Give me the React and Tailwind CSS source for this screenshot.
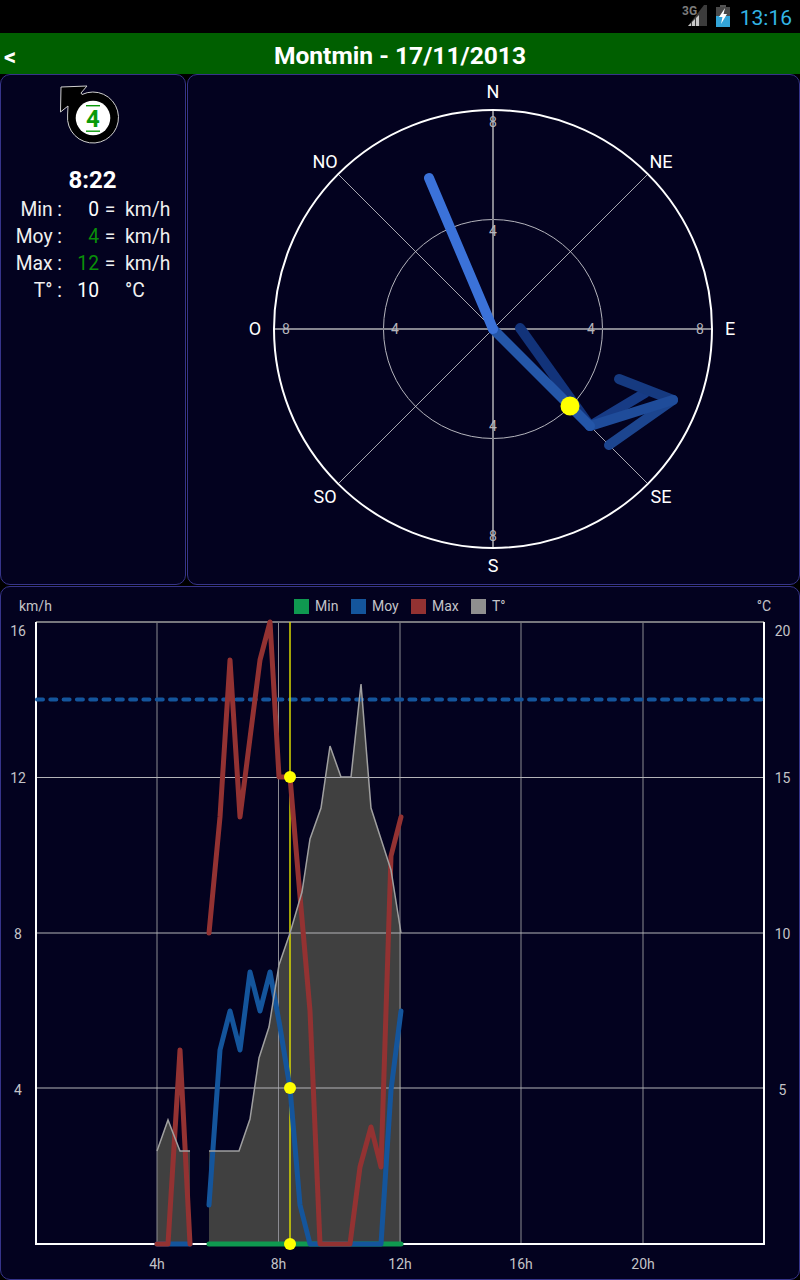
import React from 'react';

const toPoints = (pts) => pts.map((p) => p.join(',')).join(' ');

const tempA = [[157, 1151], [168, 1120], [180, 1151], [190, 1151]];
const tempB = [[209, 1151], [219, 1151], [229, 1151], [239, 1151], [250, 1119], [259, 1058], [269, 1027], [279, 965], [290, 933], [302, 892], [310, 839], [321, 808], [330, 746], [341, 777], [351, 777], [361, 684], [371, 808], [381, 839], [391, 870], [401, 933]];
const moyA = [[157, 1244], [190, 1244]];
const moyB = [[209, 1205], [220, 1050], [230, 1011], [240, 1050], [250, 972], [260, 1011], [270, 972], [280, 1027], [290, 1088], [300, 1205], [310, 1244], [381, 1244], [391, 1090], [401, 1011]];
const maxA = [[157, 1244], [168, 1244], [180, 1050], [190, 1244]];
const maxB = [[209, 933], [220, 817], [230, 660], [240, 817], [250, 738], [260, 660], [270, 622], [279, 777], [290, 777], [300, 896], [310, 1011], [320, 1244], [350, 1244], [360, 1167], [371, 1127], [381, 1167], [391, 856], [401, 817]];

const xTicks = [[157, '4h'], [278.5, '8h'], [400, '12h'], [521, '16h'], [643, '20h']];
const yTicks = [777.5, 933, 1088];
const leftLabels = [[631, '16'], [778, '12'], [934, '8'], [1090, '4']];
const rightLabels = [[631, '20'], [778, '15'], [934, '10'], [1090, '5']];

const legend = [
  ['Min', 'bg-[#0f9950]', 'w-[57px]'],
  ['Moy', 'bg-[#14559c]', 'w-[60px]'],
  ['Max', 'bg-[#933232]', 'w-[60px]'],
  ['T°', 'bg-[#8f8f8f]', 'w-[40px]'],
];

const rows = [
  ['Min :', '0', '=', 'km/h', 'text-white'],
  ['Moy :', '4', '=', 'km/h', 'text-[#0a8f0a]'],
  ['Max :', '12', '=', 'km/h', 'text-[#0a8f0a]'],
  ['T° :', '10', '', '°C', 'text-white'],
];

const StatusBar = () => (
  <div className="h-[33px] bg-black flex items-start justify-end">
    <svg width="30" height="28" viewBox="0 0 30 28" className="mr-[7px]">
      <text x="3" y="15" fontSize="12" fontWeight="700" fill="#7c7c7c">3G</text>
      <polygon points="9,26 28,26 28,5 25,5" fill="#3c3c3c" />
      <polygon points="9,26 12,23 12,26" fill="#c8c8c8" />
      <polygon points="13,26 13,22 16,19 16,26" fill="#c8c8c8" />
      <polygon points="17,26 17,18 20,15 20,26" fill="#c8c8c8" />
    </svg>
    <svg width="14" height="22" viewBox="0 0 14 22" className="mt-[5px] mr-[10px]">
      <rect x="4" y="0" width="6" height="2" fill="#555" />
      <rect x="0" y="2" width="14" height="20" fill="#4a4a4a" />
      <rect x="0" y="11" width="14" height="11" fill="#33a5d8" />
      <polygon points="9,3 3,12 6.5,12 5,19 11,9 7.5,9" fill="#fff" />
    </svg>
    <span className="text-[21px] leading-[36px] text-[#33b5e5] mr-[8px]">13:16</span>
  </div>
);

const Header = () => (
  <div className="h-[41px] bg-[#005f00] flex items-center relative">
    <span className="absolute left-[4px] top-[9px] text-[24px] font-bold text-white leading-[30px]">&lt;</span>
    <div className="w-full text-center text-[24.6px] font-bold text-white leading-[41px] pt-[3px]">Montmin - 17/11/2013</div>
  </div>
);

const TrendIcon = () => (
  <svg width="80" height="70" viewBox="55 80 80 70" className="block">
    <path
      d="M61 87 L87 86 L81 93 L82 94.5 A25.5 25.5 0 1 1 67.6 115 L68 106 L60.5 112 Z"
      fill="#000"
      stroke="#d0d0d0"
      strokeWidth="1"
    />
    <circle cx="93" cy="118" r="17.3" fill="#fff" />
    <rect x="86" y="105" width="14" height="1.4" fill="#0a9a0a" />
    <rect x="86" y="130.5" width="14" height="1.4" fill="#0a9a0a" />
    <text x="93" y="127" textAnchor="middle" fontSize="24" fontWeight="700" fill="#0a9a0a">4</text>
  </svg>
);

const InfoPanel = () => (
  <div className="w-[186px] h-[511px] shrink-0 bg-[#03021f] border border-[#36348a] rounded-[10px]">
    <div className="ml-[54px] mt-[5px]">
      <TrendIcon />
    </div>
    <div className="mt-[16px] text-center text-[24px] font-bold text-white leading-[28px] pr-[1px]">8:22</div>
    <div className="mt-[2px]">
      {rows.map(([label, value, eq, unit, color]) => (
        <div key={label} className="flex h-[27px] items-center text-[19.3px] text-[#f0f0f0] leading-[27px]">
          <span className="w-[61px] text-right">{label}</span>
          <span className={`w-[37px] text-right ${color}`}>{value}</span>
          <span className="w-[22px] text-center">{eq}</span>
          <span className="ml-[4px]">{unit}</span>
        </div>
      ))}
    </div>
  </div>
);

const CompassPanel = () => {
  const cx = 493;
  const cy = 329;
  const d = 154.9;
  return (
    <div className="flex-1 h-[511px] bg-[#03021f] border border-[#36348a] rounded-[10px]">
      <svg width="611" height="509" viewBox="188 75 611 509" className="block">
        <circle cx={cx} cy={cy} r="109.5" fill="none" stroke="#b5b5bd" strokeWidth="1" />
        <line x1={cx - d} y1={cy - d} x2={cx + d} y2={cy + d} stroke="#d4d4d8" strokeWidth="0.8" />
        <line x1={cx - d} y1={cy + d} x2={cx + d} y2={cy - d} stroke="#d4d4d8" strokeWidth="0.8" />
        <line x1={cx} y1="110" x2={cx} y2="548" stroke="#85858f" strokeWidth="2" />
        <line x1="274" y1={cy} x2="712" y2={cy} stroke="#85858f" strokeWidth="2" />
        <circle cx={cx} cy={cy} r="219" fill="none" stroke="#fff" strokeWidth="2" />

        <g fontSize="14" fill="#b4b4ba" textAnchor="middle">
          <text x="493" y="127">8</text>
          <text x="493" y="236">4</text>
          <text x="493" y="431">4</text>
          <text x="493" y="541">8</text>
          <text x="286" y="334">8</text>
          <text x="395" y="334">4</text>
          <text x="591" y="334">4</text>
          <text x="700" y="334">8</text>
        </g>
        <g fontSize="18" fill="#fff" textAnchor="middle">
          <text x="493" y="98">N</text>
          <text x="493" y="572">S</text>
          <text x="255" y="335">O</text>
          <text x="730" y="335">E</text>
          <text x="325" y="168">NO</text>
          <text x="661" y="168">NE</text>
          <text x="325" y="503">SO</text>
          <text x="661" y="503">SE</text>
        </g>

        <g fill="none" strokeWidth="10" strokeLinecap="round" strokeLinejoin="round">
          <polyline points="520,328 590,426" stroke="#12337a" />
          <polyline points="590,426 645,393" stroke="#173b85" />
          <polyline points="619,379 673,400" stroke="#163a80" />
          <polyline points="673,400 609,445" stroke="#1c458f" />
          <polyline points="590,426 673,400" stroke="#1f4c9a" />
          <polyline points="493,329 590,426" stroke="#2456a8" />
          <polyline points="429,178 493,329" stroke="#3b72d9" />
        </g>
        <circle cx="570" cy="406" r="9.5" fill="#ffff00" />
      </svg>
    </div>
  );
};

const ChartPanel = () => (
  <div className="h-[694px] mt-[1px] bg-[#03021f] border border-[#36348a] rounded-[10px] text-[14px] text-[#c4c4c8]">
    <div className="h-[34px] flex items-start pt-[11px] leading-[16px]">
      <span className="w-[293px] pl-[18px]">km/h</span>
      {legend.map(([name, color, width]) => (
        <span key={name} className={`flex items-center gap-[6px] ${width}`}>
          <span className={`w-[15px] h-[15px] ${color}`} />
          {name}
        </span>
      ))}
      <span className="ml-auto mr-[28px]">°C</span>
    </div>
    <svg width="798" height="658" viewBox="1 621 798 658" className="block overflow-visible">
      <polygon points={toPoints([[157, 1244], ...tempA, [190, 1244]])} fill="#404040" />
      <polygon points={toPoints([[209, 1244], ...tempB, [401, 1244]])} fill="#404040" />

      {xTicks.map(([x]) => (
        <line key={x} x1={x} y1="622" x2={x} y2="1244" stroke="#8c8c92" strokeWidth="1" />
      ))}
      {yTicks.map((y) => (
        <line key={y} x1="36" y1={y} x2="764" y2={y} stroke="#b4b4b8" strokeWidth="1" />
      ))}
      <line x1="36" y1="622" x2="764" y2="622" stroke="#77777d" strokeWidth="2" />
      <line x1="36" y1="622" x2="36" y2="1245" stroke="#fff" strokeWidth="2" />
      <line x1="764" y1="622" x2="764" y2="1245" stroke="#fff" strokeWidth="2" />
      <line x1="35" y1="1244" x2="765" y2="1244" stroke="#fff" strokeWidth="2" />

      <line x1="37" y1="699.5" x2="764" y2="699.5" stroke="#14559c" strokeWidth="4" strokeDasharray="6 7.3" strokeLinecap="round" />
      <line x1="290" y1="622" x2="290" y2="1244" stroke="#d8d800" strokeWidth="1.5" />

      <g fill="none" strokeWidth="5" strokeLinecap="round" strokeLinejoin="round">
        <polyline points="209,1244 401,1244" stroke="#0f9950" />
        <polyline points={toPoints(moyA)} stroke="#14559c" />
        <polyline points={toPoints(moyB)} stroke="#14559c" />
        <polyline points={toPoints(maxA)} stroke="#933232" />
        <polyline points={toPoints(maxB)} stroke="#933232" />
      </g>
      <polyline points={toPoints(tempA)} fill="none" stroke="#a0a0a0" strokeWidth="1.5" />
      <polyline points={toPoints(tempB)} fill="none" stroke="#a0a0a0" strokeWidth="1.5" />

      <circle cx="290" cy="777" r="6" fill="#ffff00" />
      <circle cx="290" cy="1088" r="6" fill="#ffff00" />
      <circle cx="290" cy="1244" r="6" fill="#ffff00" />

      <g fontSize="14" fill="#c4c4c8" textAnchor="middle">
        {leftLabels.map(([y, t]) => (
          <text key={t} x="18" y={y + 5}>{t}</text>
        ))}
        {rightLabels.map(([y, t]) => (
          <text key={t} x="782.5" y={y + 5}>{t}</text>
        ))}
        {xTicks.map(([x, t]) => (
          <text key={t} x={x} y="1269">{t}</text>
        ))}
      </g>
    </svg>
  </div>
);

export default function App() {
  return (
    <div className="w-[800px] h-[1280px] bg-black overflow-hidden [font-family:Roboto,sans-serif]">
      <StatusBar />
      <Header />
      <div className="flex gap-[1px]">
        <InfoPanel />
        <CompassPanel />
      </div>
      <ChartPanel />
    </div>
  );
}
